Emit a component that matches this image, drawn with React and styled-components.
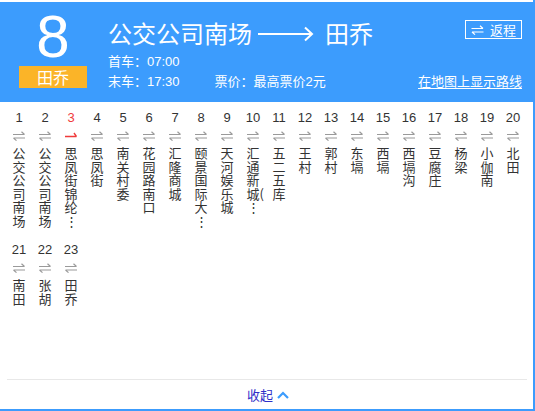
import React from 'react'
import styled, { createGlobalStyle } from 'styled-components'

const BLUE = '#3c9cfd'

const GlobalStyle = createGlobalStyle`
  html, body {
    margin: 0;
    padding: 0;
    background: #fff;
  }
  body {
    font-family: "Liberation Sans", "Noto Sans CJK SC", sans-serif;
  }
`

// "(" stays on the line of the char before it, as in the original list
const stations = [
  '公交公司南场', '公交公司南场', '思凤街锦纶⋮', '思凤街', '南关村委',
  '花园路南口', '汇隆商城', '颐景国际大⋮', '天河娱乐城', '汇通新城\u2060(\u200B⋮',
  '五二五库', '王村', '郭村', '东塥', '西塥',
  '西塥沟', '豆腐庄', '杨梁', '小伽南', '北田',
  '南田', '张胡', '田乔',
]

const SwapIcon = ({ color = '#9a9a9a', width = 12 }) => (
  <svg width={width} height="10" viewBox="0 0 12 10" fill="none" stroke={color} strokeWidth="1.2">
    <path d="M0 3.5H11.5M11.5 3.5L8.5 0.8" />
    <path d="M0.5 7H12M0.5 7L3.5 9.6" />
  </svg>
)

const CurrentIcon = () => (
  <svg width="12" height="10" viewBox="0 0 12 10" fill="none" stroke="#f03b3b" strokeWidth="1.4">
    <path d="M0 5.5H11.5M11.5 5.5L9 2" />
  </svg>
)

const LongArrow = () => (
  <svg width="56" height="16" viewBox="0 0 56 16" fill="none" stroke="#fff" strokeWidth="2">
    <path d="M0 8H54" />
    <path d="M47 1.5L54 8L47 14.5" />
  </svg>
)

const Chevron = () => (
  <svg width="12" height="8" viewBox="0 0 12 8" fill="none" stroke={BLUE} strokeWidth="2.2">
    <path d="M1 7L6 2L11 7" />
  </svg>
)

export default function App() {
  return (
    <>
      <GlobalStyle />
      <Panel>
        <Header>
          <LineBlock>
            <LineNumber>8</LineNumber>
            <Terminal>田乔</Terminal>
          </LineBlock>
          <Info>
            <TitleRow>
              <Title>
                公交公司南场
                <ArrowWrap><LongArrow /></ArrowWrap>
                田乔
              </Title>
              <ReturnButton>
                <SwapIcon color="#fff" width={13} />
                <span>返程</span>
              </ReturnButton>
            </TitleRow>
            <MetaRow>首车：07:00</MetaRow>
            <MetaRow>
              <span>末车：17:30</span>
              <Price>票价：最高票价2元</Price>
              <MapLink>在地图上显示路线</MapLink>
            </MetaRow>
          </Info>
        </Header>

        <Stations>
          {stations.map((name, i) => {
            const current = i === 2
            return (
              <Station key={i}>
                <Index current={current}>{i + 1}</Index>
                <IconSlot>{current ? <CurrentIcon /> : <SwapIcon />}</IconSlot>
                <Name>{name}</Name>
              </Station>
            )
          })}
        </Stations>

        <Footer>
          <Collapse>收起</Collapse>
          <Chevron />
        </Footer>
      </Panel>
    </>
  )
}

const Panel = styled.div`
  width: 535px;
  height: 411px;
  box-sizing: border-box;
  padding-top: 2px;
  border-right: 2px solid ${BLUE};
  border-bottom: 2px solid ${BLUE};
  display: flex;
  flex-direction: column;
  overflow: hidden;
`

const Header = styled.div`
  height: 100px;
  flex-shrink: 0;
  background: ${BLUE};
  display: flex;
  align-items: flex-start;
  padding-left: 19px;
  box-sizing: border-box;
  color: #fff;
`

const LineBlock = styled.div`
  width: 68px;
  display: flex;
  flex-direction: column;
  align-items: center;
  padding-top: 6px;
`

const LineNumber = styled.div`
  font-size: 60px;
  line-height: 58px;
  height: 58px;
  color: #fff;
`

const Terminal = styled.div`
  width: 68px;
  height: 22px;
  background: #fbb428;
  color: #fff;
  font-size: 16px;
  line-height: 22px;
  text-align: center;
  font-family: "Noto Sans CJK SC", sans-serif;
`

const Info = styled.div`
  flex: 1;
  margin-left: 21px;
  padding-right: 11px;
  padding-top: 16px;
`

const TitleRow = styled.div`
  display: flex;
  justify-content: space-between;
  align-items: flex-start;
  height: 30px;
`

const Title = styled.div`
  display: flex;
  align-items: center;
  font-family: "Noto Sans CJK SC", sans-serif;
  font-size: 24px;
  line-height: 30px;
  white-space: nowrap;
`

const ArrowWrap = styled.span`
  display: flex;
  margin: 1px 11px 0 6px;
`

const ReturnButton = styled.div`
  margin-top: 2px;
  height: 19px;
  width: 57px;
  box-sizing: border-box;
  border: 1px solid #fff;
  display: flex;
  align-items: center;
  gap: 6px;
  padding-left: 5px;
  font-family: "Noto Sans CJK SC", sans-serif;
  font-size: 13px;
  line-height: 17px;
`

const MetaRow = styled.div`
  display: flex;
  font-size: 13px;
  line-height: 20px;
  white-space: nowrap;
  &:nth-of-type(2) {
    margin-top: 4px;
  }
`

const Price = styled.span`
  margin-left: 35px;
`

const MapLink = styled.span`
  margin-left: auto;
  text-decoration: underline;
  text-underline-offset: 2px;
  cursor: pointer;
`

const Stations = styled.div`
  flex: 1;
  display: grid;
  grid-template-columns: repeat(20, 26px);
  grid-auto-rows: 122px;
  row-gap: 10px;
  align-content: start;
  padding: 8px 0 0 6px;
`

const Station = styled.div`
  display: flex;
  flex-direction: column;
  align-items: center;
  color: #333;
`

const Index = styled.div`
  font-size: 13px;
  line-height: 16px;
  height: 16px;
  color: ${({ current }) => (current ? '#f03b3b' : '#333')};
`

const IconSlot = styled.div`
  margin-top: 5px;
  height: 10px;
  display: flex;
`

const Name = styled.div`
  margin-top: 5px;
  width: 13px;
  font-family: "Noto Sans CJK SC", sans-serif;
  font-size: 13px;
  line-height: 13.5px;
  word-break: break-all;
  color: #333;
`

const Footer = styled.div`
  height: 29px;
  flex-shrink: 0;
  margin: 0 6px 0 7px;
  border-top: 1px solid #e8e8e8;
  display: flex;
  align-items: center;
  justify-content: center;
  gap: 4px;
  padding-left: 2px;
`

const Collapse = styled.span`
  font-family: "Noto Sans CJK SC", sans-serif;
  font-size: 13px;
  color: #2f2fc8;
`
